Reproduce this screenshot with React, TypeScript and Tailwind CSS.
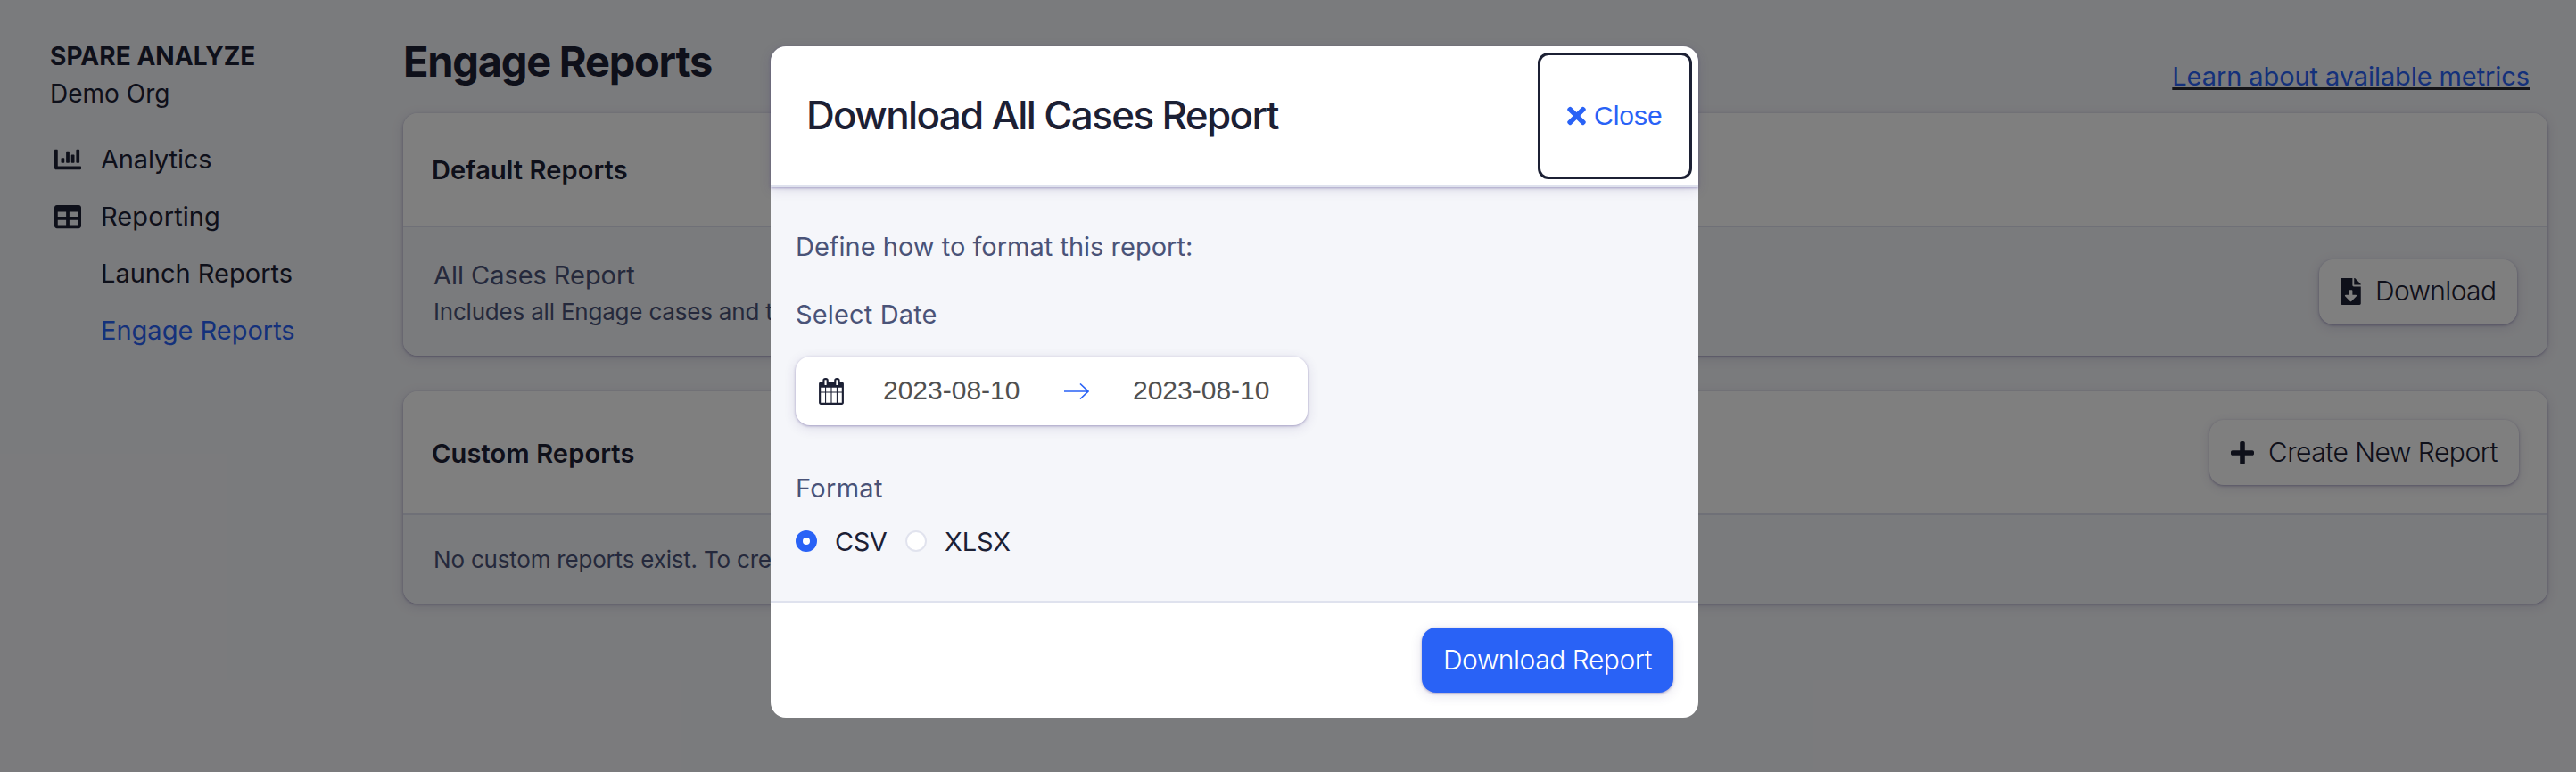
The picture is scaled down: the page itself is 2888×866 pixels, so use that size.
import React from "react";
import { FaChartBar, FaFileDownload, FaPlus, FaTable, FaTimes } from "react-icons/fa";

const raised =
  "shadow-[0_1px_3px_rgba(60,45,125,0.38),0_3px_14px_rgba(60,45,110,0.14)]";

function CalendarIcon() {
  return (
    <svg viewBox="64 0 1664 1792" className="h-[30px] w-[28px]" fill="#1c2034">
      <path d="M192 1664h288v-288h-288v288zm352 0h320v-288h-320v288zm-352-352h288v-320h-288v320zm352 0h320v-320h-320v320zm-352-384h288v-288h-288v288zm736 736h320v-288h-320v288zm-384-736h320v-288h-320v288zm768 736h288v-288h-288v288zm-384-352h320v-320h-320v320zm-352-864v-288q0-13-9.500-22.500t-22.500-9.500h-64q-13 0-22.500 9.500t-9.500 22.500v288q0 13 9.500 22.500t22.500 9.500h64q13 0 22.500-9.500t9.500-22.500zm736 864h288v-320h-288v320zm-384-384h320v-288h-320v288zm384 0h288v-288h-288v288zm32-480v-288q0-13-9.500-22.500t-22.500-9.500h-64q-13 0-22.500 9.500t-9.500 22.500v288q0 13 9.500 22.500t22.500 9.500h64q13 0 22.500-9.500t9.500-22.500zm384-64v1280q0 52-38 90t-90 38h-1408q-52 0-90-38t-38-90v-1280q0-52 38-90t90-38h128v-96q0-66 47-113t113-47h64q66 0 113 47t47 113v96h384v-96q0-66 47-113t113-47h64q66 0 113 47t47 113v96h128q52 0 90 38t38 90z" />
    </svg>
  );
}

function Sidebar() {
  return (
    <aside className="w-[452px] shrink-0 pt-[42px]">
      <div className="pl-14 text-[28px] leading-[42px]">
        <div className="font-bold tracking-[0.05px]">SPARE ANALYZE</div>
        <div>Demo Org</div>
      </div>
      <nav className="mt-[21px] text-[29px] leading-[64px]">
        <a className="flex items-center pl-[61px]">
          <FaChartBar className="h-[30px] w-[30px]" />
          <span className="pl-[22px] tracking-[-0.15px]">Analytics</span>
        </a>
        <a className="flex items-center pl-[61px]">
          <FaTable className="h-[30px] w-[30px]" />
          <span className="pl-[22px] tracking-[0.1px]">Reporting</span>
        </a>
        <a className="block pl-[113px]">Launch Reports</a>
        <a className="block pl-[113px] text-[#2962f6]">Engage Reports</a>
      </nav>
    </aside>
  );
}

function Reports() {
  return (
    <main className="w-[2404px] shrink-0">
      <div className="flex h-[127px] justify-between">
        <h1 className="pt-[39px] text-[47px] font-bold leading-[60px] tracking-[-1.25px]">Engage Reports</h1>
        <a className="mr-[20px] pt-[65px] text-[29px] leading-[41px] tracking-[-0.09px] text-[#2962f6] underline decoration-[#2a2b30] decoration-[3px] underline-offset-[2px]">
          Learn about available metrics
        </a>
      </div>

      <section className={`rounded-2xl ${raised}`}>
        <header className="flex h-32 items-center rounded-t-2xl border-b-2 border-[#dfe0ee] bg-white pl-8 pt-px text-[29px] font-semibold tracking-[0.1px]">
          Default Reports
        </header>
        <div className="flex h-[144px] items-center justify-between rounded-b-2xl bg-[#f5f6fa] pl-[34px] pr-[34px] text-[#4a5378]">
          <div className="pt-px">
            <div className="text-[29px] leading-[44px] tracking-[-0.05px]">All Cases Report</div>
            <div className="whitespace-nowrap text-[26px] leading-[38px] tracking-[-0.2px]">Includes all Engage cases and t</div>
          </div>
          <button className={`flex h-[73px] w-[222px] items-center rounded-2xl bg-white pl-6 text-[30px] font-light tracking-[-0.65px] text-[#1c2034] ${raised}`}>
            <FaFileDownload viewBox="0 0 384 512" className="h-[30px] w-[23px]" />
            <span className="pb-px pl-4">Download</span>
          </button>
        </div>
      </section>

      <section className={`mt-10 rounded-2xl ${raised}`}>
        <header className="flex h-[139px] items-center justify-between rounded-t-2xl border-b-2 border-[#dfe0ee] bg-white pl-8 pr-8">
          <span className="pt-0.5 text-[29px] font-semibold tracking-[0.15px]">Custom Reports</span>
          <button className={`flex h-[73px] w-[347px] items-center rounded-2xl bg-white pl-6 text-[30px] font-light tracking-[-0.5px] ${raised}`}>
            <FaPlus viewBox="0 0 448 512" className="h-[30px] w-[26px]" />
            <span className="pb-px pl-4">Create New Report</span>
          </button>
        </header>
        <div className="flex h-[99px] items-center rounded-b-2xl bg-[#f5f6fa] pl-[34px] text-[26px] tracking-[-0.2px] text-[#4a5378]">
          No custom reports exist. To cre
        </div>
      </section>
    </main>
  );
}

function DownloadDialog() {
  return (
    <div className="flex h-[753px] w-[1040px] flex-col">
      <header className={`z-10 flex h-[158px] shrink-0 items-center justify-between rounded-t-[17px] border-b-2 border-[#dfe2ee] bg-white pl-[40px] pr-[7px] ${raised}`}>
        <h2 className="pb-[2px] text-[44px] font-medium tracking-[-1.65px]">Download All Cases Report</h2>
        <button className="flex h-[142px] w-[173px] items-center rounded-xl border-[3px] border-[#1c2034] pl-[30px] text-[#2962f6]">
          <FaTimes viewBox="0 0 352 512" className="h-[30px] w-[21px]" />
          <span className="pb-[2px] pl-[9px] font-['Liberation_Sans',sans-serif] text-[30px]">Close</span>
        </button>
      </header>

      <div className="flex h-[464px] shrink-0 flex-col bg-[#f5f6fa] pl-7 pt-[47px] text-[29px] text-[#4a5378]">
        <p className="leading-[40px]">Define how to format this report:</p>
        <label className="mt-9 leading-[40px] tracking-[0.15px]">Select Date</label>
        <div className={`mt-[27px] flex h-[77px] w-[574px] items-center rounded-2xl bg-white pl-[26px] font-['Liberation_Sans',sans-serif] text-[30px] text-[#505050] ${raised}`}>
          <CalendarIcon />
          <span className="w-[247px] pb-[2px] pl-[44px]">2023-08-10</span>
          <svg viewBox="0 0 28 18" className="h-[18px] w-[28px]" fill="none" stroke="#2962f6" strokeWidth="1.6">
            <path d="M0 9H27M18 0.500L27 9L18 17.500" />
          </svg>
          <span className="pb-[2px] pl-[49px]">2023-08-10</span>
        </div>
        <label className="mt-[51px] leading-[40px] tracking-[0.3px]">Format</label>
        <div className="mt-5 flex h-10 items-center text-[#1c2034]">
          <span className="mb-0.5 flex size-6 items-center justify-center rounded-full bg-[#2962f6]">
            <span className="size-2 rounded-full bg-white" />
          </span>
          <span className="w-[99px] pl-5 tracking-[-0.5px]">CSV</span>
          <span className="mb-0.5 size-6 rounded-full border-2 border-[#e1e3ee] bg-white" />
          <span className="pl-[20px] tracking-[-0.1px]">XLSX</span>
        </div>
      </div>

      <footer className="flex flex-1 items-center justify-end rounded-b-[17px] border-t-2 border-[#dfe2ee] bg-white pr-7">
        <button className={`flex h-[73px] w-[282px] items-center rounded-2xl bg-[#2962f6] pl-6 text-[30px] font-light tracking-[-0.47px] text-white ${raised}`}>
          <span className="pb-px">Download Report</span>
        </button>
      </footer>
    </div>
  );
}

export default function App() {
  return (
    <div className="relative flex h-[866px] w-[2888px] overflow-hidden bg-[#f5f6fa] font-['Inter',sans-serif] text-[#1c2034]">
      <Sidebar />
      <Reports />
      <div className="absolute inset-0 z-20 bg-black/50 pl-[864px] pt-[52px]">
        <DownloadDialog />
      </div>
    </div>
  );
}
